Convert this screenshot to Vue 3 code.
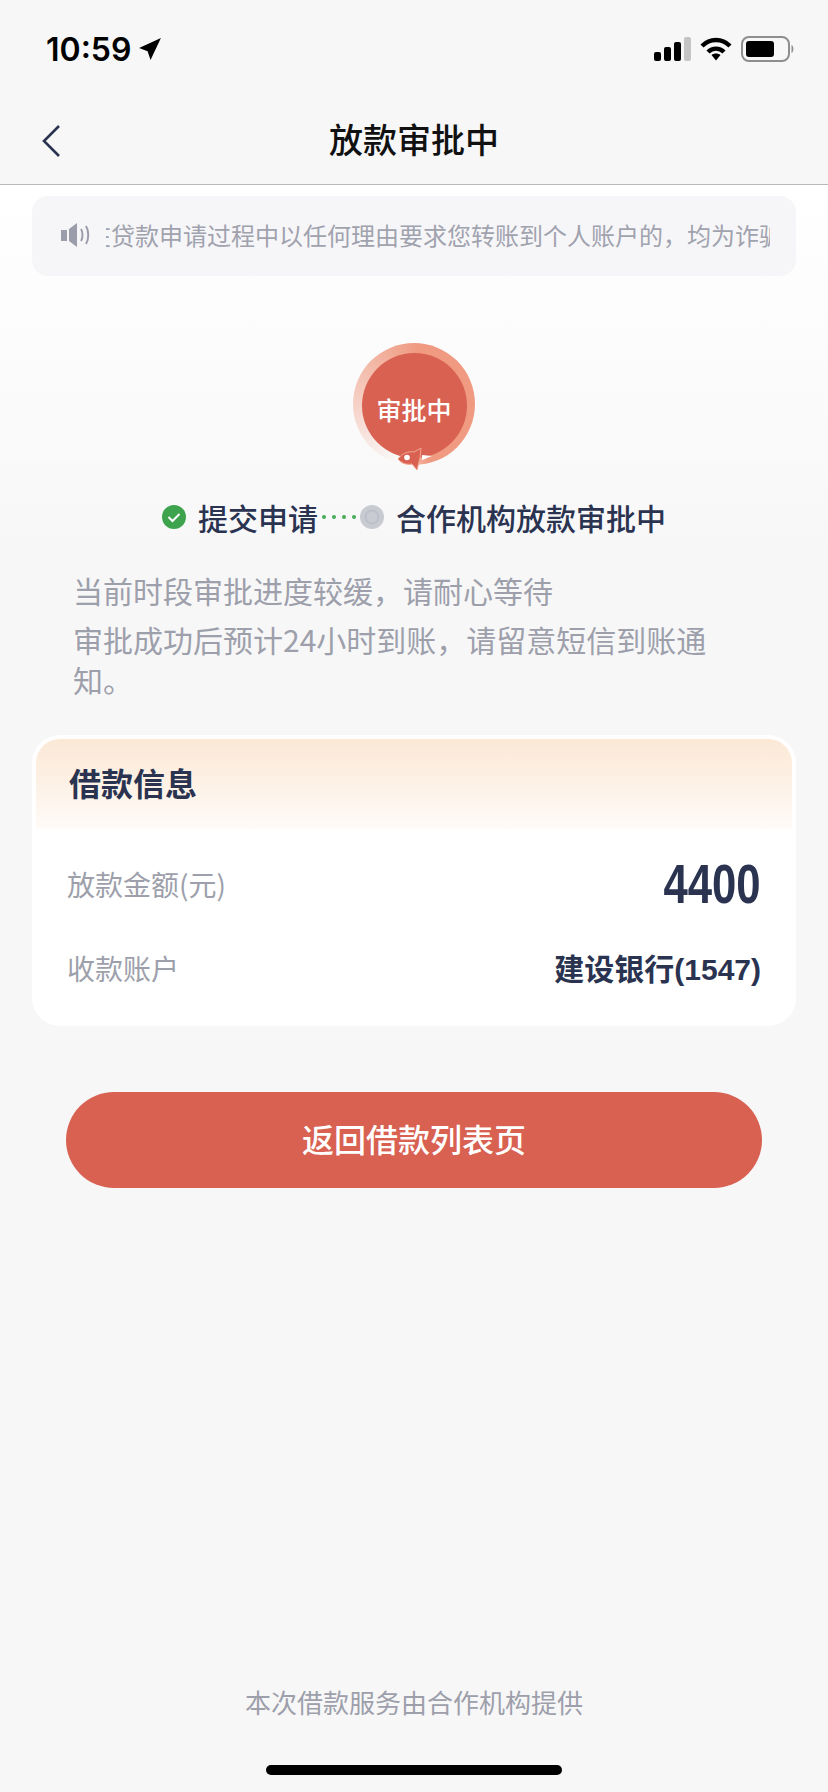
<script setup>
const rows = [
  { label: '放款金额(元)', value: '4400', big: true },
  { label: '收款账户', value: '建设银行(1547)', big: false }
]
</script>

<template>
  <div class="page">
    <div class="status">
      <div class="time">
        <span>10:59</span>
        <svg width="24" height="24" viewBox="0 0 22 22"><path d="M21 1 L1 10 L8.800 13 L11.500 21 Z" fill="#000" /></svg>
      </div>
      <div class="status-icons">
        <svg width="37" height="24" viewBox="0 0 37 24">
          <rect x="0" y="15" width="7" height="9" rx="2" fill="#000" />
          <rect x="10" y="10" width="7" height="14" rx="2" fill="#000" />
          <rect x="20" y="5" width="7" height="19" rx="2" fill="#000" />
          <rect x="30" y="0" width="7" height="24" rx="2" fill="#c4c4c4" />
        </svg>
        <svg width="32" height="24" viewBox="0 0 32 24">
          <path d="M2 9 C10 1 22 1 30 9" fill="none" stroke="#000" stroke-width="4.4" />
          <path d="M8 15 C12.5 10.5 19.500 10.500 24 15" fill="none" stroke="#000" stroke-width="4.4" />
          <path d="M11.500 18 C14 16 18 16 20.500 18 L16 23.500 Z" fill="#000" />
        </svg>
        <svg width="54" height="26" viewBox="0 0 54 26">
          <rect x="1" y="1" width="47" height="24" rx="7" fill="none" stroke="#8e8e8e" stroke-width="2" />
          <rect x="5" y="5" width="28" height="16" rx="3" fill="#000" />
          <path d="M50.500 9 C53 10 53 16 50.500 17 Z" fill="#8e8e8e" />
        </svg>
      </div>
    </div>

    <div class="nav">
      <svg class="back" width="20" height="34" viewBox="0 0 20 34"><path d="M18 2 L3 17 L18 32" fill="none" stroke="#2b3350" stroke-width="2.6" /></svg>
      <span>放款审批中</span>
    </div>

    <div class="content">
      <div class="notice">
        <svg width="32" height="26" viewBox="0 0 32 26">
          <path d="M1 8 H7 V19 H1 Z M9 7 L17 1 V25 L9 19 Z" fill="#9b9dab" />
          <path d="M21 7 C23 10 23 16 21 19 M26 4 C29 9 29 17 26 22" fill="none" stroke="#9b9dab" stroke-width="2" />
        </svg>
        <div class="notice-track">
          <span>在贷款申请过程中以任何理由要求您转账到个人账户的，均为诈骗行为</span>
        </div>
      </div>

      <div class="ring">
        <div class="ring-inner">审批中</div>
        <svg class="rocket" width="36" height="24" viewBox="0 0 36 24">
          <path d="M1 12 C5 6 12 4 17 5 L24 1 L23 11 L20 23 L15 17 C9 18 4 16 1 12 Z" fill="#d86152" stroke="#f3a893" stroke-width="1" />
          <circle cx="10" cy="10.500" r="2.800" fill="#fff" />
          <path d="M25 8 L35 9 L25 13 Z" fill="#fff" />
        </svg>
      </div>

      <div class="steps">
        <svg width="24" height="24" viewBox="0 0 24 24">
          <circle cx="12" cy="12" r="12" fill="#3da44d" />
          <path d="M6.500 12 L10.500 16 L17.500 9" fill="none" stroke="#fff" stroke-width="2" />
        </svg>
        <span class="step-text first">提交申请</span>
        <span class="dots"><i v-for="n in 4" :key="n"></i></span>
        <svg width="24" height="24" viewBox="0 0 24 24">
          <circle cx="12" cy="12" r="12" fill="#c9cbd3" />
          <circle cx="12" cy="12" r="6.500" fill="none" stroke="#bdbfc9" stroke-width="2" />
        </svg>
        <span class="step-text">合作机构放款审批中</span>
      </div>

      <div class="tips">
        <p>当前时段审批进度较缓，请耐心等待</p>
        <p>审批成功后预计24小时到账，请留意短信到账通知。</p>
      </div>

      <div class="card">
        <div class="card-head">借款信息</div>
        <div class="card-body">
          <div v-for="row in rows" :key="row.label" class="row">
            <span class="row-label">{{ row.label }}</span>
            <span :class="row.big ? 'amount' : 'bank'">{{ row.value }}</span>
          </div>
        </div>
      </div>

      <button class="back-btn">返回借款列表页</button>
    </div>

    <div class="footer">本次借款服务由合作机构提供</div>
    <div class="home-wrap"><div class="home"></div></div>
  </div>
</template>

<style scoped>
.page {
  width: 828px;
  height: 1792px;
  background: #f7f7f8;
  display: flex;
  flex-direction: column;
  font-family: "Noto Sans CJK SC", "Liberation Sans", sans-serif;
  color: #2a3350;
  overflow: hidden;
}

/* status bar */
.status {
  height: 88px;
  padding: 10px 33px 0 46px;
  display: flex;
  justify-content: space-between;
  align-items: center;
  box-sizing: border-box;
}
.time {
  display: flex;
  align-items: center;
  gap: 7px;
  font-family: Inter, sans-serif;
  font-size: 32px;
  font-weight: 600;
  color: #000;
}
.status-icons {
  display: flex;
  align-items: center;
  gap: 9px;
}

/* nav */
.nav {
  height: 97px;
  box-sizing: border-box;
  border-bottom: 1px solid #b9b9bb;
  display: flex;
  align-items: center;
  justify-content: center;
  position: relative;
  font-size: 34px;
  font-weight: 500;
  color: #111;
  padding-top: 4px;
}
.back {
  position: absolute;
  left: 41px;
  top: 36px;
}

.content {
  flex: 1;
  padding: 11px 32px 0;
  background: linear-gradient(#fff 0, #f7f7f8 380px);
  display: flex;
  flex-direction: column;
}

/* notice */
.notice {
  height: 80px;
  border-radius: 16px;
  background: #f6f6f8;
  display: flex;
  align-items: center;
  padding: 0 26px 0 28px;
  gap: 14px;
}
.notice svg {
  flex: none;
  margin-bottom: 3px;
}
.notice-track {
  flex: 1;
  overflow: hidden;
  white-space: nowrap;
  font-size: 24px;
  color: #a0a2ae;
  margin-bottom: 4px;
}
.notice-track span {
  display: inline-block;
  margin-left: -19px;
}

/* progress ring */
.ring {
  width: 122px;
  height: 122px;
  margin: 67px auto 0;
  border-radius: 50%;
  position: relative;
  display: flex;
  align-items: center;
  justify-content: center;
  box-sizing: border-box;
  padding-top: 3px;
  background: conic-gradient(from 195deg, rgba(240, 155, 130, 0) 0deg, rgba(240, 155, 130, 0.4) 70deg, #ef9a81 170deg, #ef9a81 330deg, #f7c3b4 350deg, #fff 360deg);
}
.ring-inner {
  width: 105px;
  height: 105px;
  border-radius: 50%;
  background: #d86152;
  color: #fff;
  font-size: 25px;
  font-weight: 500;
  display: flex;
  align-items: center;
  justify-content: center;
  padding-top: 6px;
  box-sizing: border-box;
}
.rocket {
  position: absolute;
  left: 44px;
  bottom: -6px;
}

/* steps */
.steps {
  margin-top: 30px;
  display: flex;
  align-items: center;
  padding-left: 130px;
  font-size: 30px;
  font-weight: 500;
}
.step-text {
  margin-left: 12px;
  line-height: 44px;
}
.step-text.first {
  margin-right: 4px;
}
.dots {
  display: flex;
  gap: 6px;
  margin-right: 4px;
}
.dots i {
  width: 4px;
  height: 4px;
  background: #45ad58;
  border-radius: 50%;
}

/* tips */
.tips {
  margin-top: 31px;
  padding-left: 41px;
  width: 680px;
  font-size: 30px;
  color: #9d9fab;
  line-height: 40px;
}
.tips p {
  margin: 0 0 9px;
}

/* card */
.card {
  margin-top: 27px;
  height: 291px;
  box-sizing: border-box;
  background: #fff;
  border-radius: 28px;
  padding: 4px;
  overflow: hidden;
}
.card-head {
  height: 90px;
  box-sizing: border-box;
  padding: 0 0 4px 33px;
  border-radius: 24px 24px 0 0;
  background: linear-gradient(#fbe8d5, #fffbf7);
  font-size: 32px;
  font-weight: 700;
  display: flex;
  align-items: center;
}
.card-body {
  padding: 13px 31px 0 31px;
}
.row {
  display: flex;
  justify-content: space-between;
  align-items: center;
  height: 84px;
}
.row-label {
  font-size: 28px;
  color: #9d9fab;
}
.amount {
  font-family: "Liberation Sans", sans-serif;
  font-size: 56px;
  font-weight: 700;
  display: inline-block;
  padding-bottom: 2px;
  transform: scaleX(0.78);
  transform-origin: right center;
}
.bank {
  font-family: "Liberation Sans", "Noto Sans CJK SC", sans-serif;
  font-size: 30px;
  font-weight: 700;
  padding-bottom: 2px;
}

/* button */
.back-btn {
  margin: 66px 34px 0;
  height: 96px;
  padding: 0 0 4px;
  border: none;
  border-radius: 48px;
  background: #d86152;
  color: #fff;
  font-family: inherit;
  font-size: 32px;
  font-weight: 500;
}

.footer {
  text-align: center;
  font-size: 26px;
  color: #9d9fab;
  position: absolute;
  left: 0;
  width: 828px;
  top: 1683px;
}
.home-wrap {
  position: absolute;
  top: 1765px;
  left: 0;
  width: 828px;
  display: flex;
  justify-content: center;
}
.home {
  width: 296px;
  height: 10px;
  border-radius: 5px;
  background: #000;
}
</style>

<style>
html, body {
  margin: 0;
  background: #f7f7f8;
}
</style>
